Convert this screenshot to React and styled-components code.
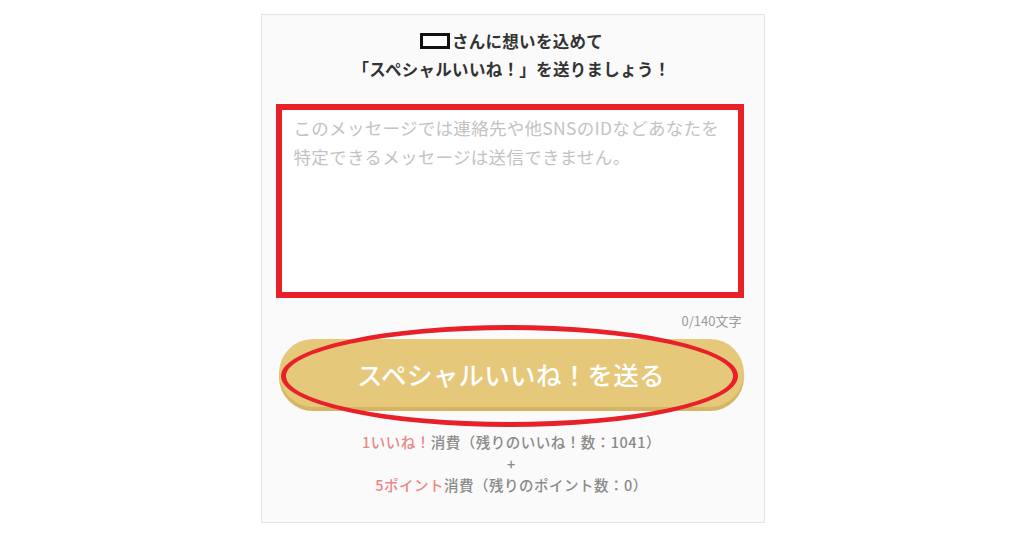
import React from 'react';
import styled, { createGlobalStyle } from 'styled-components';

const GlobalStyle = createGlobalStyle`
  html, body {
    margin: 0;
    padding: 0;
    background: #ffffff;
  }
  body {
    font-family: "Noto Sans CJK JP", "Noto Sans", sans-serif;
  }
`;

const Page = styled.div`
  width: 1024px;
  height: 538px;
  display: flex;
  justify-content: center;
  padding-top: 14px;
  box-sizing: border-box;
`;

const Card = styled.div`
  width: 504px;
  height: 509px;
  box-sizing: border-box;
  margin-left: 1px;
  padding: 12px 20px 0 14px;
  background: #fafafa;
  border: 1px solid #e4e4e4;
  display: flex;
  flex-direction: column;
`;

const Title = styled.div`
  text-align: center;
  font-size: 16.5px;
  font-weight: 700;
  line-height: 28px;
  letter-spacing: 0.3px;
  color: #333;
  padding-left: 4px;
`;

const NameBox = styled.span`
  display: inline-block;
  width: 24px;
  height: 10px;
  border: 3px solid #111;
  background: #fff;
  vertical-align: -1px;
  margin-right: 2px;
`;

const MessageBox = styled.div`
  margin-top: 21px;
  height: 194px;
  box-sizing: border-box;
  border: 6px solid #e8202a;
  background: #fff;
  padding: 4px 12px;
  font-size: 17.5px;
  line-height: 28.5px;
  letter-spacing: 0.3px;
  color: #c3c3c3;
`;

const Counter = styled.div`
  margin-top: 15px;
  text-align: right;
  font-size: 13px;
  line-height: 16px;
  color: #9a9a9a;
  padding-right: 2px;
`;

const ButtonWrap = styled.div`
  position: relative;
  margin-top: 10px;
  margin-left: 3px;
`;

const SendButton = styled.div`
  height: 68px;
  border-radius: 34px;
  background: #e6c87b;
  box-shadow: 0 4px 0 #d5b563;
  display: flex;
  align-items: center;
  justify-content: center;
  color: #fff;
  font-size: 25.5px;
  font-weight: 500;
  letter-spacing: 0.3px;
`;

const Ring = styled.div`
  position: absolute;
  left: 2px;
  right: 6px;
  top: -14px;
  bottom: -20px;
  border: 5px solid #e8202a;
  border-radius: 50%;
  pointer-events: none;
`;

const Info = styled.div`
  margin-top: 24px;
  text-align: center;
  font-size: 14.5px;
  font-weight: 500;
  line-height: 21.5px;
  letter-spacing: 0.5px;
  color: #8a8a8a;
  padding-left: 4px;
`;

const Accent = styled.span`
  color: #e98686;
`;

export default function App() {
  return (
    <>
      <GlobalStyle />
      <Page>
        <Card>
          <Title>
            <div>
              <NameBox />
              さんに想いを込めて
            </div>
            <div>「スペシャルいいね！」を送りましょう！</div>
          </Title>
          <MessageBox>
            このメッセージでは連絡先や他SNSのIDなどあなたを
            <br />
            特定できるメッセージは送信できません。
          </MessageBox>
          <Counter>0/140文字</Counter>
          <ButtonWrap>
            <SendButton>スペシャルいいね！を送る</SendButton>
            <Ring />
          </ButtonWrap>
          <Info>
            <div>
              <Accent>1いいね！</Accent>消費（残りのいいね！数：1041）
            </div>
            <div>+</div>
            <div>
              <Accent>5ポイント</Accent>消費（残りのポイント数：0）
            </div>
          </Info>
        </Card>
      </Page>
    </>
  );
}
